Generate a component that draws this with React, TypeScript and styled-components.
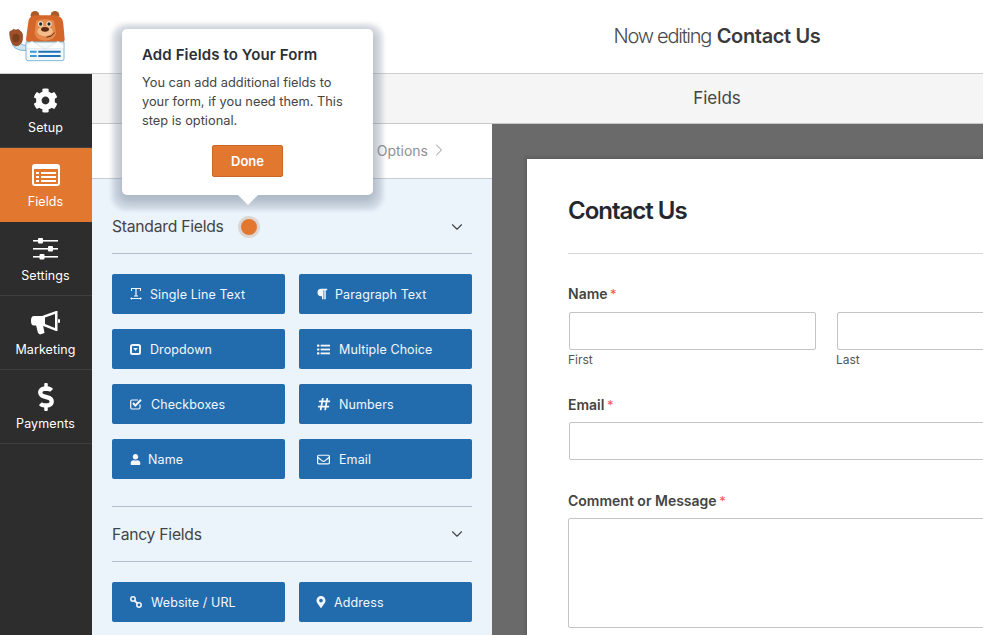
import React from 'react';
import styled, { createGlobalStyle } from 'styled-components';
import { ChevronDown, ChevronRight } from 'lucide-react';
import { FaCog, FaDollarSign, FaParagraph, FaHashtag, FaUser, FaMapMarkerAlt } from 'react-icons/fa';
import { FaRegEnvelope } from 'react-icons/fa6';

const Global = createGlobalStyle`
  html, body { margin: 0; padding: 0; background: #fff; }
  body { font-family: Inter, "Liberation Sans", sans-serif; overflow: hidden; }
  * { box-sizing: border-box; }
`;
const Page = styled.div`
  position: relative; width: 983px; height: 635px; overflow: hidden;
  display: flex; flex-direction: column;
`;
const Header = styled.header`
  height: 74px; flex: none; display: flex; align-items: center; background: #fff;
  border-bottom: 1px solid #cfcfcf;
`;
const LogoBox = styled.div`
  width: 92px; height: 73px; flex: none; display: flex;
`;
const HeaderTitle = styled.div`
  flex: 1; text-align: center; font-size: 20px; color: #4a4a4a; padding: 0 0 2px 359px;
  span { font-weight: 300; letter-spacing: -1.25px; }
  b { font-weight: 600; color: #3a3a3a; letter-spacing: -0.35px; }
`;
const Body = styled.div`flex: 1; display: flex; min-height: 0;`;
const Sidebar = styled.nav`width: 92px; flex: none; background: #2d2d2d;`;
const NavItem = styled.div<{ $active?: boolean }>`
  height: 74px; display: flex; flex-direction: column; align-items: center; padding: 12px 1px 0 0;
  color: #fff; background: ${p => p.$active ? '#e27730' : 'transparent'};
  border-bottom: 1px solid ${p => p.$active ? '#e27730' : '#3f3f3f'};
  font-size: 12.5px; letter-spacing: 0.1px;
`;
const NavIcon = styled.div`height: 29px; display: flex; align-items: center; justify-content: center; margin-bottom: 5px;`;
const Main = styled.div`flex: 1; display: flex; flex-direction: column; min-width: 0;`;
const Toolbar = styled.div`
  height: 50px; flex: none; background: #f5f5f5; border-bottom: 1px solid #c9c9c9;
  text-align: center; font-size: 17px; line-height: 48px; color: #444; padding-left: 359px;
`;
const Split = styled.div`flex: 1; display: flex; min-height: 0;`;
const Panel = styled.aside`width: 400px; flex: none; background: #ebf3fb; display: flex; flex-direction: column;`;
const Tabs = styled.div`
  height: 55px; flex: none; background: #fff; border-bottom: 1px solid #c5ccd6;
  display: flex; align-items: center; justify-content: flex-end; padding: 0 43px 2px 0; gap: 1px;
  font-size: 14px; color: #8e9194;
`;
const PanelBody = styled.div`padding: 0 20px;`;
const GroupHead = styled.div<{ $first?: boolean }>`
  height: ${p => p.$first ? '75px' : '55px'}; padding-top: ${p => p.$first ? '21px' : '0'};
  display: flex; align-items: center; gap: 13px; font-size: 15.7px; letter-spacing: -0.25px; color: #444;
  border-bottom: 1px solid #b2bccb;
`;
const GroupTitle = styled.span`flex: 1;`;
const Arrow = styled(ChevronDown)`margin-right: 6px; stroke-width: 1.5px; color: #444;`;
const Divider = styled.div`height: 1px; background: #b2bccb; margin-top: 27px;`;
const Grid = styled.div`
  display: grid; grid-template-columns: 173px 173px; gap: 15px 14px; padding-top: 20px;
`;
const FieldBtn = styled.div`
  height: 40px; background: #226cae; border-radius: 2px; color: #f3f7fb; display: flex; align-items: center;
  padding-left: 18px; font-size: 12.5px; letter-spacing: 0.1px;
`;
const BtnIcon = styled.span<{ $gap: number; $pull?: number }>`
  display: inline-flex; align-items: center; margin-right: ${p => p.$gap}px; margin-left: ${p => -(p.$pull ?? 0)}px;
`;
const Preview = styled.div`
  flex: 1; background: #6a6a6a; padding: 35px 0 0 35px; min-width: 0; overflow: hidden;
`;
const Card = styled.div`
  width: 600px; height: 600px; background: #fff; padding: 33px 0 0 41px;
  box-shadow: -2px -2px 3px rgba(0,0,0,.12);
`;
const FormTitle = styled.h1`
  margin: 0; font-size: 24px; line-height: 38px; font-weight: 600; color: #24282e; letter-spacing: -1px;
  padding-bottom: 23px; border-bottom: 1px solid #d6d6d6;
`;
const Label = styled.div<{ $top: number; $bottom: number }>`
  margin-top: ${p => p.$top}px; margin-bottom: ${p => p.$bottom}px; font-size: 14px; font-weight: 600; color: #444; line-height: 17px;
  i { color: #f0555a; font-style: normal; font-weight: 400; margin-left: 2.5px; font-size: 13px; }
`;
const Row = styled.div`display: flex; gap: 20px;`;
const Col = styled.div`width: 248px; flex: none;`;
const Input = styled.div<{ $h?: number; $flush?: boolean }>`
  height: ${p => p.$h ?? 38}px; margin-left: ${p => p.$flush ? 0 : 1}px; border: 1px solid #c4c4c4; border-radius: 2px; background: #fff;
`;
const Sub = styled.div`font-size: 12px; color: #555; line-height: 15px; margin-top: 2px;`;
const Tooltip = styled.div`
  position: absolute; left: 122px; top: 29px; width: 251px; height: 166px; background: #fff; border-radius: 5px;
  padding: 17px 20px;
  box-shadow: 0 5px 4px 10px rgba(120,135,155,.2), 0 4px 8px 4px rgba(100,115,135,.35);
  &::after { content: ''; position: absolute; left: 116px; bottom: -10px; width: 0; height: 0;
    border-left: 10px solid transparent; border-right: 10px solid transparent; border-top: 10px solid #fff; }
`;
const TipTitle = styled.div`font-size: 15px; font-weight: 600; color: #2b2f36; line-height: 18px; margin-bottom: 9px; letter-spacing: .12px;`;
const TipText = styled.p`margin: 0; font-size: 12.8px; line-height: 19px; color: #444;`;
const DoneWrap = styled.div`display: flex; justify-content: center; margin-top: 15px;`;
const Done = styled.div`
  width: 71px; height: 32px; background: #e27730; border: 1px solid #c9672a; border-radius: 2px; color: #fff; font-size: 13px; font-weight: 600;
  display: flex; align-items: center; justify-content: center;
`;
const Dot = styled.span`
  width: 16px; height: 16px; margin-left: 4px; border-radius: 50%; background: #e27730; box-shadow: 0 0 0 3px #dcd6d2;
`;

const Bear = () => (
  <svg width="80" height="70" viewBox="0 0 240 210">
    <path d="M35 122Q35 152 78 152L78 136Q58 136 52 116Z" fill="#cfe4f0" stroke="#7fb8d6" strokeWidth="3" />
    <circle cx="105" cy="46" r="13" fill="#a85a28" />
    <circle cx="165" cy="46" r="13" fill="#a85a28" />
    <path d="M84 72Q84 48 106 46L164 46Q190 48 190 72L194 118Q194 128 182 130L90 130Q78 128 78 118Z" fill="#d4662a" />
    <path d="M108 62Q135 52 162 62L168 100Q165 122 135 122Q108 122 104 100Z" fill="#e48a4c" />
    <circle cx="122" cy="72" r="8" fill="#f7ead8" />
    <circle cx="147" cy="72" r="8" fill="#f7ead8" />
    <circle cx="122" cy="72" r="5" fill="#2a2422" />
    <circle cx="147" cy="72" r="5" fill="#2a2422" />
    <ellipse cx="135" cy="94" rx="23" ry="15" fill="#f2bd8a" />
    <ellipse cx="135" cy="88" rx="12" ry="7" fill="#5c2a14" />
    <path d="M140 112Q156 110 164 98" stroke="#5c2a14" strokeWidth="3" fill="none" />
    <path d="M78 126H192V176Q192 182 186 182H84Q78 182 78 176Z" fill="#f3f8fb" stroke="#7fb8d6" strokeWidth="3" />
    <path d="M96 124L135 148L174 124L190 134V146H80V134Z" fill="#fff" stroke="#cfe0ea" strokeWidth="2" />
    <path d="M90 152h20v6H90zM90 165h20v6H90z" fill="#3a9ad9" />
    <path d="M115 152h67v6h-67zM115 165h67v6h-67z" fill="#1e73b5" />
    <path d="M29 104Q27 92 35 92L40 88L48 90L55 88L62 94Q70 100 68 116Q66 136 47 138Q32 134 29 104Z" fill="#a1502a" stroke="#7a3f1c" strokeWidth="1.5" />
    <ellipse cx="48" cy="114" rx="11" ry="13" fill="#7a3f1c" />
  </svg>
);

const Sliders = () => (
  <svg width="25" height="24" viewBox="0 0 25 24" fill="#fff">
    <rect y="3" width="25" height="1.6" /><rect x="5" y="1" width="5" height="5.6" rx="1" />
    <rect y="11" width="25" height="1.6" /><rect x="15" y="9" width="5" height="5.6" rx="1" />
    <rect y="19" width="25" height="1.6" /><rect x="6.5" y="17" width="5" height="5.6" rx="1" />
  </svg>
);
const ListCard = () => (
  <svg width="28" height="22" viewBox="0 0 28 22">
    <rect x="1" y="1" width="26" height="20" rx="2" fill="none" stroke="#fff" strokeWidth="2" />
    <rect x="1" y="1" width="26" height="4" fill="#fff" />
    <path d="M4 8h3v2H4zM9 8h15v2H9zM4 12h3v2H4zM9 12h15v2H9zM4 16h3v2H4zM9 16h15v2H9z" fill="#fff" />
  </svg>
);
const Horn = () => (
  <svg width="29" height="24" viewBox="0 0 29 24" fill="#fff">
    <path fillRule="evenodd" d="M3 5H11L25 0H26.5V20H25L11 14.5H3Q0 14.5 0 10V9.5Q0 5 3 5ZM14 6.5V13L24 17V3Z" />
    <rect x="27" y="8" width="2" height="4" rx="1" />
    <path d="M5 14H12L13.5 22L9 23.5L7 22Z" />
  </svg>
);
const TextWidth = () => (
  <svg width="12" height="12" viewBox="0 0 12 12" fill="#f3f7fb">
    <path d="M1 0h10v3h-1V1H6.6v6.5H8v1H4v-1h1.4V1H2v2H1z" />
    <path d="M0 10.5l2-1.3v.9h8v-.9l2 1.3-2 1.3v-.9H2v.9z" />
  </svg>
);
const DropIcon = () => (
  <svg width="11" height="11" viewBox="0 0 11 11">
    <rect x="1" y="1" width="9" height="9" rx="1.5" fill="none" stroke="#f3f7fb" strokeWidth="2" />
    <path d="M3.2 4h4.6L5.5 7z" fill="#f3f7fb" />
  </svg>
);
const ListIcon = () => (
  <svg width="13" height="11" viewBox="0 0 13 11" fill="#f3f7fb">
    <rect y=".5" width="2.4" height="2.2" rx=".6" /><rect x="3.6" y=".7" width="9.4" height="1.8" />
    <rect y="4.4" width="2.4" height="2.2" rx=".6" /><rect x="3.6" y="4.6" width="9.4" height="1.8" />
    <rect y="8.3" width="2.4" height="2.2" rx=".6" /><rect x="3.6" y="8.5" width="9.4" height="1.8" />
  </svg>
);
const CheckIcon = () => (
  <svg width="12" height="12" viewBox="0 0 12 12" fill="none" stroke="#f3f7fb">
    <path d="M10 6.5V9.5Q10 11 8.5 11H2Q.7 11 .7 9.5V3.2Q.7 2 2 2H8" strokeWidth="1.2" />
    <path d="M3 5L5.4 7.6L11 1.8" strokeWidth="2" />
  </svg>
);
const LinkIcon = () => (
  <svg width="12" height="12" viewBox="0 0 12 12" fill="none" stroke="#f3f7fb" strokeWidth="1.5">
    <circle cx="3" cy="3" r="2.2" />
    <circle cx="9" cy="9" r="2.2" />
    <path d="M4.6 4.6L7.4 7.4" strokeWidth="2" />
  </svg>
);

const fields: [React.ReactNode, string, number, number][] = [
  [<TextWidth />, 'Single Line Text', 8, 0],
  [<FaParagraph size={12} />, 'Paragraph Text', 7, 1],
  [<DropIcon />, 'Dropdown', 9, 0],
  [<ListIcon />, 'Multiple Choice', 9, 0],
  [<CheckIcon />, 'Checkboxes', 9, 0],
  [<FaHashtag size={14} />, 'Numbers', 8, 0],
  [<FaUser size={11} />, 'Name', 7, 0],
  [<FaRegEnvelope size={13} />, 'Email', 9, 0],
];

export default function App() {
  return (
    <Page>
      <Global />
      <Header>
        <LogoBox><Bear /></LogoBox>
        <HeaderTitle><span>Now editing</span> <b>Contact Us</b></HeaderTitle>
      </Header>
      <Body>
        <Sidebar>
          <NavItem><NavIcon><FaCog size={25} /></NavIcon>Setup</NavItem>
          <NavItem $active><NavIcon><ListCard /></NavIcon>Fields</NavItem>
          <NavItem><NavIcon><Sliders /></NavIcon>Settings</NavItem>
          <NavItem><NavIcon><Horn /></NavIcon>Marketing</NavItem>
          <NavItem><NavIcon><FaDollarSign size={28} /></NavIcon>Payments</NavItem>
        </Sidebar>
        <Main>
          <Toolbar>Fields</Toolbar>
          <Split>
            <Panel>
              <Tabs>Options <ChevronRight size={20} strokeWidth={1.2} /></Tabs>
              <PanelBody>
                <GroupHead $first>
                  <span>Standard Fields</span><Dot />
                  <GroupTitle />
                  <Arrow size={18} />
                </GroupHead>
                <Grid>
                  {fields.map(([ic, t, g, pull]) => (
                    <FieldBtn key={t}><BtnIcon $gap={g} $pull={pull}>{ic}</BtnIcon>{t}</FieldBtn>
                  ))}
                </Grid>
                <Divider />
                <GroupHead>
                  <GroupTitle>Fancy Fields</GroupTitle>
                  <Arrow size={18} />
                </GroupHead>
                <Grid>
                  <FieldBtn><BtnIcon $gap={9}><LinkIcon /></BtnIcon>Website / URL</FieldBtn>
                  <FieldBtn><BtnIcon $gap={7} $pull={2}><FaMapMarkerAlt size={12} /></BtnIcon>Address</FieldBtn>
                </Grid>
              </PanelBody>
            </Panel>
            <Preview>
              <Card>
                <FormTitle>Contact Us</FormTitle>
                <Label $top={31} $bottom={9}>Name<i>*</i></Label>
                <Row>
                  <Col><Input /><Sub>First</Sub></Col>
                  <Col><Input /><Sub>Last</Sub></Col>
                </Row>
                <Label $top={29} $bottom={8}>Email<i>*</i></Label>
                <Input />
                <Label $top={32} $bottom={8}>Comment or Message<i>*</i></Label>
                <Input $h={110} $flush />
              </Card>
            </Preview>
          </Split>
        </Main>
      </Body>
      <Tooltip>
        <TipTitle>Add Fields to Your Form</TipTitle>
        <TipText>You can add additional fields to your form, if you need them. This step is optional.</TipText>
        <DoneWrap><Done>Done</Done></DoneWrap>
      </Tooltip>
    </Page>
  );
}
